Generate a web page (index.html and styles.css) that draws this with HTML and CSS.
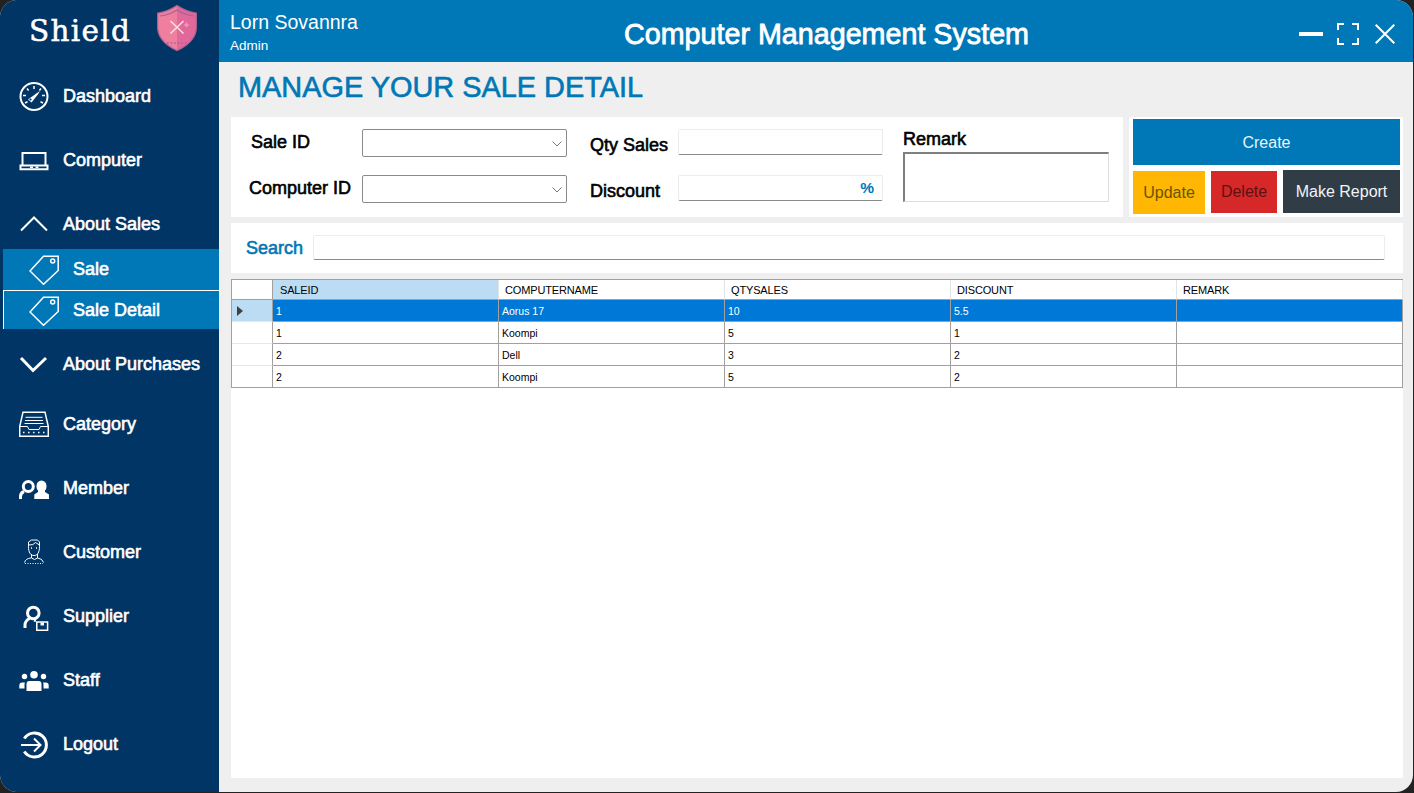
FILE: index.html
```html
<!DOCTYPE html>
<html lang="en">
<head>
<meta charset="utf-8">
<title>Computer Management System</title>
<link rel="stylesheet" href="styles.css">
</head>
<body>
<div class="window">
  <aside class="sidebar">
    <div class="brand">
      <span class="brand-name">Shield</span>
      <svg class="brand-logo" width="40" height="46" viewBox="0 0 40 46">
        <path d="M20 .6Q30 7 39.4 8.2V22C39.4 33 30 41 20 45.6 10 41 .6 33 .6 22V8.2Q10 7 20 .6Z" fill="#ee7f9f"/>
        <path d="M20 .6Q30 7 39.4 8.2V22C39.4 33 30 41 20 45.6Z" fill="#e0689a"/>
        <path d="M20 .6Q30 7 39.4 8.2V22C39.4 33 30 41 20 45.6 10 41 .6 33 .6 22V8.2Q10 7 20 .6Z" fill="none" stroke="#a9628f" stroke-width="1.2"/>
        <path d="M3 11Q12 10 20 5 28 10 37 11" fill="none" stroke="#a9628f" stroke-width="1.2"/>
        <path d="M13.500 16L26.500 28.500M26.500 16L13.500 28.500" stroke="#fbdfe0" stroke-width="1.6" fill="none"/>
        <path d="M10 38H30" stroke="#a9628f" stroke-width="1.4" stroke-dasharray="1.6 2" fill="none"/>
        <path d="M29.500 17l1 2 2 1-2 1-1 2-1-2-2-1 2-1z" fill="#f49ab6"/>
      </svg>
    </div>
    <nav class="menu">
      <a class="item">
        <svg class="icon" viewBox="0 0 30 30"><circle cx="15" cy="15.500" r="13.500" class="s2"/><path d="M15 5v3M8 7.500l1.600 2M4 14.500h3M6 22l2.500-1.200M22 7.500l-1.600 2M26 14.500h-3M24 22l-2.500-1.200" class="s15"/><path d="M9 18.500l9-6.500 3-2-2 3.200-6.500 8.300z" class="f"/><circle cx="11.500" cy="18.500" r="1.100" fill="#003566"/></svg>
        <span>Dashboard</span>
      </a>
      <a class="item">
        <svg class="icon" viewBox="0 0 30 30"><path d="M3.500 20V8h23V20" class="s2"/><path d="M1.500 20.500h27v3.800h-27z" class="s2"/><path d="M11 21.500h3v1.500h-3zM16.500 21.500h3v1.500h-3z" class="f"/></svg>
        <span>Computer</span>
      </a>
      <a class="item item-top">
        <svg class="icon" viewBox="0 0 30 30"><path d="M2 21.500L15 8.500 28 21.500" class="s2"/></svg>
        <span>About Sales</span>
      </a>
      <div class="submenu">
        <a class="sub">
          <svg class="icon" viewBox="0 0 30 30"><path d="M14.500 1.200H29.200V15.500L14.500 29.300 1 16Z" class="s15"/><circle cx="23.700" cy="6" r="2" class="s15"/></svg>
          <span>Sale</span>
        </a>
        <a class="sub sub-active">
          <svg class="icon" viewBox="0 0 30 30"><path d="M14.500 1.200H29.200V15.500L14.500 29.300 1 16Z" class="s15"/><circle cx="23.700" cy="6" r="2" class="s15"/></svg>
          <span>Sale Detail</span>
        </a>
      </div>
      <a class="item item-next">
        <svg class="icon" viewBox="0 0 30 30"><path d="M2 9L14 21.500 27 9" class="s3"/></svg>
        <span>About Purchases</span>
      </a>
      <a class="item">
        <svg class="icon" viewBox="0 0 30 30"><path d="M.7 17.500L4 3.200h22L29.300 17.500V27.300H.7Z" class="s15"/><path d="M.7 17.500h7.800l1.500 3h10l1.500-3h7.800M6.500 8.300h17M6 11.500h18M5.500 14.500h19" class="s1"/><path d="M4 23.500h22" stroke="#fff" stroke-width="1.500" stroke-dasharray="1.500 3.500" fill="none"/></svg>
        <span>Category</span>
      </a>
      <a class="item">
        <svg class="icon" viewBox="0 0 30 30"><circle cx="9.300" cy="13.500" r="5" class="s3"/><path d="M1.500 26v-2.500q0-3.500 3.500-5" class="s3"/><path d="M17.500 13a5 5.500 0 0 1 10 0c0 2-.5 3.500-1.500 4.500v1.500l4 2.500v4.500H15.300v-4.500l3.700-2.500v-1.500c-1-1-1.500-2.500-1.500-4.500Z" class="f"/></svg>
        <span>Member</span>
      </a>
      <a class="item">
        <svg class="icon" viewBox="0 0 30 30"><path d="M9.500 9.500V5l3-2h6l2 2v4.500c0 6-2 9-5.500 9s-5.500-3-5.500-9ZM9.500 8q5 .5 7-2.500l4 2.500M12.500 17v4l3 1.500 3-1.500v-4M12 21q-5.500 .5-6.500 4.500M18.500 21q5 .5 6 4.500" class="s1"/><path d="M6 26.500h18" stroke="#fff" stroke-dasharray="1 1.500" fill="none"/><path d="M12 11h1M17 11h1" class="s15"/></svg>
        <span>Customer</span>
      </a>
      <a class="item">
        <svg class="icon" viewBox="0 0 30 30"><circle cx="14.300" cy="12" r="5.800" class="s3"/><path d="M6 27v-3q0-4 4.500-6.500M15 19l2 .5" class="s3"/><path d="M17.800 21h10.800v8.300H17.800z" class="s15"/><path d="M21.500 21.500v3h3.500v-3z" class="f"/></svg>
        <span>Supplier</span>
      </a>
      <a class="item">
        <svg class="icon" viewBox="0 0 30 30"><circle cx="15" cy="9.800" r="3.800" class="f"/><circle cx="5.500" cy="11.500" r="2.700" class="f"/><circle cx="24.500" cy="11.500" r="2.700" class="f"/><path d="M7.500 26v-7q0-3 3-3h9q3 0 3 3v7Z" class="f"/><path d="M.3 23.500v-3q0-3 3-3H6q-.5 1-.5 2v4ZM29.700 23.500v-3q0-3-3-3H24q.5 1 .5 2v4Z" class="f"/></svg>
        <span>Staff</span>
      </a>
      <a class="item">
        <svg class="icon" viewBox="0 0 30 30"><path d="M5.300 9.500A12 12 0 1 1 5.300 22.500" class="s3"/><path d="M2 16h19M15 9.500L21.500 16 15 22.500" class="s2"/></svg>
        <span>Logout</span>
      </a>
    </nav>
  </aside>
  <div class="content">
    <header class="topbar">
      <div class="user">
        <div class="user-name">Lorn Sovannra</div>
        <div class="user-role">Admin</div>
      </div>
      <h1 class="app-title">Computer Management System</h1>
      <div class="controls">
        <svg width="24" height="4" viewBox="0 0 24 4"><rect width="24" height="4" fill="#fff"/></svg>
        <svg width="22" height="22" viewBox="0 0 22 22"><path d="M1 7V1h6M15 1h6v6M21 15v6h-6M7 21H1v-6" fill="none" stroke="#fff" stroke-width="2"/></svg>
        <svg width="20" height="20" viewBox="0 0 20 20"><path d="M.7.700l18.600 18.600M19.300.7L.7 19.300" fill="none" stroke="#fff" stroke-width="2"/></svg>
      </div>
    </header>
    <main class="body">
      <h2 class="page-title">MANAGE YOUR SALE DETAIL</h2>
      <section class="form-row">
        <div class="card form">
          <label class="lbl lbl-id">Sale ID</label>
          <div class="combo"><svg width="10" height="6" viewBox="0 0 10 6"><path d="M.5.500L5 5l4.500-4.500" fill="none" stroke="#777" stroke-width="1"/></svg></div>
          <label class="lbl lbl-qty">Qty Sales</label>
          <div class="field"></div>
          <div class="remark">
            <label class="lbl lbl-remark">Remark</label>
            <div class="textarea"></div>
          </div>
          <label class="lbl lbl-id lbl-computer">Computer ID</label>
          <div class="combo"><svg width="10" height="6" viewBox="0 0 10 6"><path d="M.5.500L5 5l4.500-4.500" fill="none" stroke="#777" stroke-width="1"/></svg></div>
          <label class="lbl lbl-qty">Discount</label>
          <div class="field field-pct"><span>%</span></div>
        </div>
        <div class="card actions">
          <button class="btn btn-create">Create</button>
          <div class="btn-row">
            <button class="btn btn-update">Update</button>
            <button class="btn btn-delete">Delete</button>
            <button class="btn btn-report">Make Report</button>
          </div>
        </div>
      </section>
      <section class="card search">
        <label class="search-label">Search</label>
        <div class="field search-field"></div>
      </section>
      <section class="card grid-card">
        <table class="grid">
          <colgroup><col class="c-head"><col class="c-col"><col class="c-col"><col class="c-col"><col class="c-col"><col class="c-col"></colgroup>
          <thead>
            <tr><th class="corner"></th><th class="sorted">SALEID</th><th>COMPUTERNAME</th><th>QTYSALES</th><th>DISCOUNT</th><th>REMARK</th></tr>
          </thead>
          <tbody>
            <tr class="selected"><td class="rowhead"><span class="arrow"></span></td><td>1</td><td>Aorus 17</td><td>10</td><td>5.5</td><td></td></tr>
            <tr><td class="rowhead"></td><td>1</td><td>Koompi</td><td>5</td><td>1</td><td></td></tr>
            <tr><td class="rowhead"></td><td>2</td><td>Dell</td><td>3</td><td>2</td><td></td></tr>
            <tr class="last"><td class="rowhead"></td><td>2</td><td>Koompi</td><td>5</td><td>2</td><td></td></tr>
          </tbody>
        </table>
      </section>
    </main>
  </div>
</div>
</body>
</html>
```
FILE: styles.css
```css
* { box-sizing: border-box; }
html, body { margin: 0; height: 100%; }
body {
  background: #222;
  font-family: "Liberation Sans", Arial, sans-serif;
  overflow: hidden;
}
.window {
  width: 1413px;
  height: 792px;
  border-radius: 17px;
  overflow: hidden;
  display: flex;
  background: #efefef;
}

/* sidebar */
.sidebar {
  width: 219px;
  flex: none;
  background: #003566;
  color: #fff;
}
.brand {
  height: 64px;
  display: flex;
  align-items: flex-start;
  padding: 5px 0 0 29px;
}
.brand-name {
  font-family: "DejaVu Serif", serif;
  font-size: 29.500px;
  line-height: 52px;
  letter-spacing: 1.3px;
  -webkit-text-stroke: .5px currentColor;
  width: 128px;
}
.brand-logo { flex: none; }
.icon { width: 30px; height: 30px; flex: none; display: block; }
.f { fill: #fff; }
.s1, .s15, .s2, .s25, .s3 { fill: none; stroke: #fff; }
.s1 { stroke-width: 1; }
.s15 { stroke-width: 1.5; }
.s2 { stroke-width: 2; }
.s25 { stroke-width: 2.500; }
.s3 { stroke-width: 3; }
.item, .sub {
  display: flex;
  align-items: center;
  gap: 14px;
  font-size: 18px;
  -webkit-text-stroke: .6px currentColor;
}
.item span { padding-top: 1px; }
.item { height: 64px; padding-left: 19px; }
.item-top { height: 57px; padding-top: 7px; }
.item-next { height: 56px; margin-top: 7px; }
.submenu { margin-left: 3px; }
.sub {
  height: 41px;
  padding-left: 26px;
  background: #0077b6;
}
.sub-active {
  height: 39px;
  border-top: 1px solid #fff;
  border-left: 1px solid #fff;
  padding-left: 25px;
}
.sub-active .icon { margin-top: 1px; }

/* right column */
.content { flex: 1; min-width: 0; display: flex; flex-direction: column; }
.topbar {
  height: 62px;
  flex: none;
  background: #0077b6;
  color: #fff;
  display: flex;
  align-items: center;
  padding: 0 18px 0 11px;
}
.user { width: 394px; flex: none; margin-top: 6px; }
.user-name { font-size: 19.500px; line-height: 23px; }
.user-role { font-size: 13.500px; line-height: 23px; }
.app-title {
  margin: 5px 0 0;
  font-size: 28.700px;
  font-weight: 400;
  -webkit-text-stroke: .8px currentColor;
  line-height: 30px;
  white-space: nowrap;
}
.controls { margin-left: auto; display: flex; align-items: center; gap: 14px; margin-top: 5px; }
.controls svg { display: block; }
.controls svg:last-child { margin-left: 2px; }

.body { flex: 1; min-height: 0; display: flex; flex-direction: column; padding: 0 10px 14px 12px; }
.page-title {
  margin: 0;
  height: 55px;
  padding: 9px 0 0 7px;
  font-size: 28.900px;
  line-height: 32px;
  font-weight: 400;
  -webkit-text-stroke: .6px currentColor;
  white-space: nowrap;
  color: #0077b6;
}
.card { background: #fff; }
.form-row { display: flex; gap: 6px; height: 100px; flex: none; }

.form {
  width: 892px;
  display: grid;
  grid-template-columns: 131px 205px 23px 88px 205px 20px 206px;
  grid-auto-rows: 46px;
  padding-top: 12px;
}
.lbl {
  font-size: 18px;
  color: #000;
  white-space: nowrap;
  -webkit-text-stroke: .6px currentColor;
}
.lbl-id { grid-column: 1; line-height: 26px; padding-left: 20px; }
.lbl-computer { padding-left: 18px; }
.lbl-qty { grid-column: 3 / 5; padding-left: 23px; line-height: 32px; }
.form .combo { grid-column: 2; }
.form .field { grid-column: 5; }
.combo {
  height: 28px;
  border: 1px solid #8a8a8a;
  border-radius: 2px;
  background: #fff;
  display: flex;
  align-items: center;
  justify-content: flex-end;
  padding: 2px 4px 0 0;
}
.field {
  height: 26px;
  background: #fff;
  border: 1px solid #ececec;
  border-bottom: 1px solid #8a8a8a;
  border-radius: 2px;
}
.field-pct {
  display: flex;
  align-items: center;
  justify-content: flex-end;
  padding-right: 8px;
  color: #0077b6;
  font-size: 15.500px;
  font-weight: 700;
}
.remark { grid-column: 7; grid-row: 1 / 3; display: flex; flex-direction: column; }
.lbl-remark { line-height: 20px; }
.textarea {
  margin-top: 3px;
  height: 50px;
  border-style: solid;
  border-width: 2px 1px 1px 2px;
  border-color: #7f7f7f #dedede #dedede #7f7f7f;
}

.actions { width: 274px; padding: 2px 3px 0 4px; }
.btn {
  border: 0;
  padding: 2px 0 0;
  display: block;
  font: 400 16px "Liberation Sans", Arial, sans-serif;
}
.btn-create { width: 267px; height: 46px; background: #0077b6; color: #e8f4fb; }
.btn-row { display: flex; gap: 6px; align-items: flex-start; margin-top: 5px; }
.btn-update { width: 72px; height: 43px; margin-top: 1px; padding: 0; background: #ffb703; color: #6b5300; }
.btn-delete { width: 66px; height: 42px; margin-top: 1px; padding: 0; background: #d62828; color: #5c1212; }
.btn-report { width: 117px; height: 43px; padding: 0; background: #303d47; color: #f0f4f8; }

.search {
  height: 50px;
  flex: none;
  margin-top: 6px;
  display: flex;
  align-items: center;
  padding: 0 18px 0 15px;
}
.search-label {
  width: 67px;
  flex: none;
  padding-top: 1px;
  font-size: 18px;
  -webkit-text-stroke: .6px currentColor;
  color: #0077b6;
}
.search-field { flex: 1; height: 25px; margin-bottom: 1px; }

.grid-card { flex: 1; min-height: 0; margin-top: 6px; }
.grid {
  table-layout: fixed;
  border-collapse: separate;
  border-spacing: 0;
  width: 1172px;
  border-top: 1px solid #a0a0a0;
  border-left: 1px solid #a0a0a0;
  color: #000;
}
.c-head { width: 41px; }
.c-col { width: 226px; }
.grid th {
  height: 20px;
  padding: 0 0 0 6px;
  text-align: left;
  font-size: 11px;
  font-weight: 400;
  letter-spacing: -.15px;
  background: #fff;
  border-right: 1px solid #e4e4e4;
  border-bottom: 1px solid #a0a0a0;
  white-space: nowrap;
}
.grid .corner { border-right: 1px solid #a0a0a0; }
.grid .sorted { background: #bcdcf4; padding-left: 7px; }
.grid td {
  height: 22px;
  padding: 1px 0 0 3px;
  font-size: 10.500px;
  border-right: 1px solid #a0a0a0;
  border-bottom: 1px solid #a0a0a0;
  background: #fff;
}
.grid .rowhead { padding: 0 0 0 5px; border-bottom-color: #e6e6e6; }
.grid .last .rowhead { border-bottom-color: #a0a0a0; }
.grid .selected td { background: #0078d7; color: #fff; }
.grid .selected .rowhead { background: #bcdcf4; }
.arrow {
  display: block;
  width: 0;
  height: 0;
  border-style: solid;
  border-width: 5px 0 5px 6px;
  border-color: transparent transparent transparent #404040;
}
```
